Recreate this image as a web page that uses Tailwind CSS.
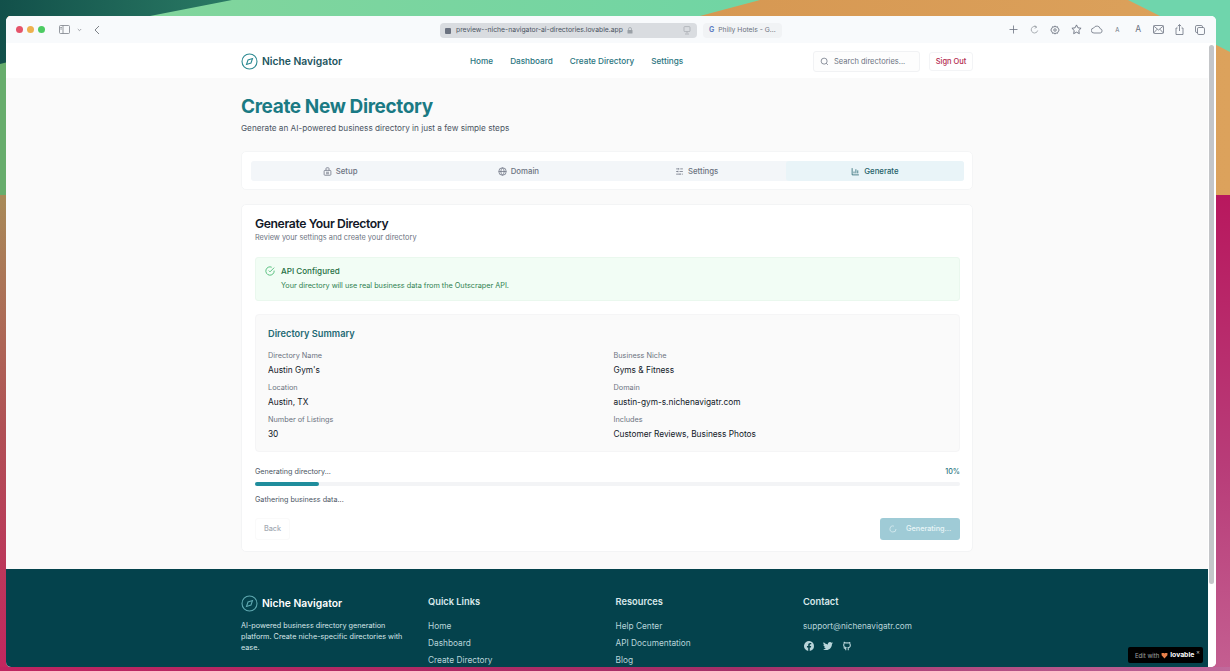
<!DOCTYPE html>
<html lang="en">
<head>
  <meta charset="UTF-8">
  <title>Create New Directory - Niche Navigator</title>
  <script src="https://cdn.jsdelivr.net/npm/@tailwindcss/browser@4"></script>
</head>
<body class="relative w-[1230px] h-[671px] overflow-hidden bg-[#c8487c] font-['Inter',sans-serif]">

  <!-- desktop wallpaper -->
  <svg class="absolute inset-0" width="1230" height="671" viewBox="0 0 1230 671">
    <defs>
      <linearGradient id="topdark" x1="0" x2="1" y1="0" y2="0"><stop offset="0" stop-color="#12504a"/><stop offset="1" stop-color="#2a7a64"/></linearGradient>
      <linearGradient id="band" x1="0" x2="1" y1="0" y2="0"><stop offset="0" stop-color="#86d59a"/><stop offset="1" stop-color="#70d5a4"/></linearGradient>
      <linearGradient id="orange" x1="0" x2="1" y1="0" y2="0"><stop offset="0" stop-color="#cf8a45"/><stop offset="1" stop-color="#dca25c"/></linearGradient>
      <linearGradient id="pink" x1="0" x2="0" y1="0" y2="1"><stop offset="0" stop-color="#b8185e"/><stop offset="0.4" stop-color="#b83c78"/><stop offset="1" stop-color="#cf7fa8"/></linearGradient>
      <linearGradient id="leftside" x1="0" x2="0" y1="0" y2="1"><stop offset="0" stop-color="#a88a58"/><stop offset="0.5" stop-color="#b04f55"/><stop offset="1" stop-color="#c4265f"/></linearGradient>
      <linearGradient id="bottom" x1="0" x2="1" y1="0" y2="0"><stop offset="0" stop-color="#bf2460"/><stop offset="0.6" stop-color="#a42f68"/><stop offset="1" stop-color="#c06a9c"/></linearGradient>
    </defs>
    <rect width="1230" height="671" fill="url(#pink)" x="0" y="195"/>
    <rect y="0" width="1230" height="195" fill="url(#orange)"/>
    <polygon points="1128,0 1230,0 1230,52 1160,16" fill="#6fd5ac"/>
    <polygon points="0,0 760,0 700,16 0,16" fill="url(#band)"/>
    <rect x="0" y="60" width="8" height="135" fill="#67ad6c"/>
    <rect x="0" y="195" width="8" height="476" fill="url(#leftside)"/>
    <polygon points="0,0 232,0 150,16 8,16 8,62 0,64" fill="url(#topdark)"/>
    <rect y="667" width="1230" height="4" fill="url(#bottom)"/>
  </svg>

  <!-- browser window -->
  <div class="absolute left-[6px] top-[16px] w-[1210px] h-[651px] rounded-[5px] overflow-hidden bg-white flex flex-col">

    <!-- safari toolbar -->
    <div class="h-[27px] shrink-0 bg-[#f8fafc] relative flex items-center text-[#6b7280]">
      <div class="flex items-center gap-[4px] ml-[10px]">
        <span class="w-[7px] h-[7px] rounded-full bg-[#e5546a]"></span>
        <span class="w-[7px] h-[7px] rounded-full bg-[#eeb14e]"></span>
        <span class="w-[7px] h-[7px] rounded-full bg-[#4ccb62]"></span>
      </div>
      <svg class="ml-[14px]" width="11" height="9" viewBox="0 0 11 9" fill="none" stroke="#7b8088" stroke-width="0.8"><rect x="0.5" y="0.5" width="10" height="8" rx="1"/><path d="M4 0.5v8M1.3 2.5h1.6M1.3 4h1.6"/></svg>
      <svg class="ml-[7px]" width="5" height="4" viewBox="0 0 5 4" fill="none" stroke="#8a8f96" stroke-width="0.8"><path d="M0.8 1l1.7 1.7L4.2 1"/></svg>
      <svg class="ml-[12px]" width="6" height="10" viewBox="0 0 6 10" fill="none" stroke="#6f747b" stroke-width="0.9"><path d="M5 1L1 5l4 4"/></svg>

      <div class="absolute left-[434px] top-[7px] w-[257px] h-[15px] rounded-[4px] bg-[#d9dce0] flex items-center px-[5px] text-[6.8px] text-[#4b5563] whitespace-nowrap">
        <span class="w-[6px] h-[6px] rounded-[1px] bg-[#6b7280] mr-[5px]"></span>
        <span>preview--niche-navigator-ai-directories.lovable.app</span>
        <svg class="ml-[4px]" width="6" height="7" viewBox="0 0 6 7" fill="#9aa0a6"><rect x="0.5" y="3" width="5" height="3.6" rx="0.6"/><path d="M1.5 3V2a1.5 1.5 0 013 0v1" fill="none" stroke="#9aa0a6" stroke-width="0.7"/></svg>
        <svg class="ml-auto mr-[1px]" width="8" height="9" viewBox="0 0 8 9" fill="none" stroke="#a3a8ae" stroke-width="0.7"><rect x="1" y="0.6" width="6" height="5" rx="0.8"/><path d="M4 5.6v1.6M2 8h4"/></svg>
      </div>
      <div class="absolute left-[697px] top-[7px] w-[79px] h-[15px] rounded-[4px] bg-[#f1f3f5] flex items-center pl-[6px] text-[6.8px] text-[#6b7280] whitespace-nowrap">
        <span class="text-[7px] font-bold text-[#5f7fc4] mr-[4px]">G</span>
        <span>Philly Hotels - G...</span>
      </div>

      <div class="absolute right-[5.5px] top-0 h-full grid grid-cols-[repeat(10,20.7px)] items-center justify-items-center">
        <svg width="9" height="9" viewBox="0 0 9 9" fill="none" stroke="#6b7280" stroke-width="0.8"><path d="M4.5 0.5v8M0.5 4.5h8"/></svg>
        <svg width="9" height="9" viewBox="0 0 9 9" fill="none" stroke="#8a8f96" stroke-width="0.7"><path d="M6.8 2.3A3.3 3.3 0 104.5 8a3.3 3.3 0 003.2-2.5M4.6 0.5l2 1.6-1.9 1.2"/></svg>
        <svg width="10" height="10" viewBox="0 0 24 24" fill="none" stroke="#6b7280" stroke-width="2"><circle cx="12" cy="12" r="3"/><path d="M12 2l2 3 4-1 1 4 3 2-2 2 2 2-3 2-1 4-4-1-2 3-2-3-4 1-1-4-3-2 2-2-2-2 3-2 1-4 4 1z"/></svg>
        <svg width="11" height="11" viewBox="0 0 24 24" fill="none" stroke="#6b7280" stroke-width="2"><path d="M12 2l3.1 6.3 6.9 1-5 4.9 1.2 6.9-6.2-3.3-6.2 3.3L7 14.2l-5-4.9 6.9-1z"/></svg>
        <svg width="12" height="9" viewBox="0 0 24 16" fill="none" stroke="#6b7280" stroke-width="1.6"><path d="M6 15a5 5 0 01-.6-10A7 7 0 0118.5 6.5 4.3 4.3 0 0118.5 15z"/></svg>
        <span class="text-[6px] text-[#6b7280]">A</span>
        <span class="text-[8.5px] text-[#6b7280]">A</span>
        <svg width="11" height="9" viewBox="0 0 11 9" fill="none" stroke="#6b7280" stroke-width="0.8"><rect x="0.5" y="0.5" width="10" height="8" rx="1"/><path d="M0.7 1l4.8 4 4.8-4M0.7 8l3.4-3.8M10.3 8L6.9 4.2"/></svg>
        <svg width="9" height="11" viewBox="0 0 9 11" fill="none" stroke="#6b7280" stroke-width="0.8"><path d="M2.5 4H1v6.5h7V4H6.5M4.5 7V0.7M2.8 2.2L4.5 0.6l1.7 1.6"/></svg>
        <svg width="10" height="10" viewBox="0 0 10 10" fill="none" stroke="#6b7280" stroke-width="0.8"><rect x="2.5" y="2.5" width="7" height="7" rx="1.3"/><path d="M2.5 7.5H1.8A1.3 1.3 0 01.5 6.2V1.8A1.3 1.3 0 011.8.5h4.4a1.3 1.3 0 011.3 1.3v.7"/></svg>
      </div>
    </div>

    <div class="flex-1 flex min-h-0">
      <div class="flex-1 flex flex-col min-w-0">

        <!-- site header -->
        <header class="h-[35px] shrink-0 bg-white pl-[235px] pt-[2px] flex items-center relative">
          <svg width="17" height="17" viewBox="0 0 17 17" fill="none" stroke="#2d8a92" stroke-width="1.1"><circle cx="8.5" cy="8.5" r="7.5"/><path d="M11.5 5.5L10 10l-4.500 1.500L7 7z"/></svg>
          <span class="ml-[4px] mt-[1px] text-[10.3px] font-semibold text-[#215560]">Niche Navigator</span>
          <nav class="absolute left-[464px] flex gap-[17px] text-[8.2px] font-medium text-[#2a7580]">
            <a>Home</a><a>Dashboard</a><a>Create Directory</a><a>Settings</a>
          </nav>
          <div class="absolute left-[807px] w-[107px] h-[21px] rounded-[3px] border border-[#f1f2f4] bg-[#fdfdfd] flex items-center pl-[6px] text-[7.5px] text-[#6b7280]">
            <svg width="9" height="9" viewBox="0 0 24 24" fill="none" stroke="#6b7280" stroke-width="2"><circle cx="11" cy="11" r="8"/><path d="M21 21l-4.300-4.300"/></svg>
            <span class="ml-[5px]">Search directories...</span>
          </div>
          <button class="absolute left-[923px] w-[44px] h-[19px] rounded-[3px] border border-[#f3f4f6] text-[7.5px] font-medium text-[#b3294e]">Sign Out</button>
        </header>

        <main class="h-[491px] shrink-0 bg-[#fafafa] pl-[235px] pr-[235px] pt-[18px]">
          <h1 class="text-[19px] leading-[22px] font-bold tracking-[-0.37px] text-[#1a7a84]">Create New Directory</h1>
          <p class="mt-[4px] text-[8.2px] leading-[12px] text-[#4b5563]">Generate an AI-powered business directory in just a few simple steps</p>

          <!-- steps -->
          <div class="mt-[17px] h-[39px] rounded-[5px] border border-[#f4f5f6] bg-white pl-[9px] pr-[8px] py-[9px]">
            <div class="grid grid-cols-4 h-[20px] rounded-[3px] bg-[#f3f6f9] text-[7.8px] font-medium text-[#6b7280]">
              <div class="flex items-center justify-center gap-[4px] pt-[1px]">
                <svg width="9" height="9" viewBox="0 0 24 24" fill="none" stroke="#6b7280" stroke-width="2"><rect x="3" y="9" width="18" height="13" rx="2"/><path d="M8 9V4a2 2 0 012-2h4a2 2 0 012 2v5M8 14h8M8 18h8"/></svg>Setup</div>
              <div class="flex items-center justify-center gap-[4px] pt-[1px]">
                <svg width="9" height="9" viewBox="0 0 24 24" fill="none" stroke="#6b7280" stroke-width="2"><circle cx="12" cy="12" r="10"/><path d="M2 12h20M12 2a15 15 0 010 20M12 2a15 15 0 000 20"/></svg>Domain</div>
              <div class="flex items-center justify-center gap-[4px] pt-[1px]">
                <svg width="9" height="9" viewBox="0 0 24 24" fill="none" stroke="#6b7280" stroke-width="2"><path d="M10 5H3M21 5h-7M10 3v4M21 12h-9M8 12H3M8 10v4M14 19H3M21 19h-3M14 17v4"/></svg>Settings</div>
              <div class="flex items-center justify-center gap-[4px] pt-[1px] rounded-[3px] bg-[#e9f4f8] text-[#1f5f69]">
                <svg width="9" height="9" viewBox="0 0 24 24" fill="none" stroke="#1f5f69" stroke-width="2"><path d="M3 3v18h18M8 17v-5M13 17V6M18 17v-8"/></svg>Generate</div>
            </div>
          </div>

          <!-- generate card -->
          <section class="mt-[14px] h-[348px] rounded-[5px] border border-[#f3f4f5] bg-white pl-[13px] pr-[12px] pt-[11px]">
            <h2 class="text-[12.2px] leading-[16px] font-semibold tracking-[-0.39px] text-[#111827]">Generate Your Directory</h2>
            <p class="mt-[1px] text-[7.35px] leading-[10px] text-[#6b7280]">Review your settings and create your directory</p>

            <div class="mt-[14px] h-[44px] rounded-[3px] border border-[#eaf8ee] bg-[#f2fdf5] flex pl-[9px] pt-[8px]">
              <svg width="10" height="10" viewBox="0 0 24 24" fill="none" stroke="#3fb56b" stroke-width="2"><path d="M22 11.1V12a10 10 0 11-5.900-9.100"/><path d="M22 4L12 14l-3-3"/></svg>
              <div class="ml-[6px]">
                <div class="text-[8.1px] leading-[11px] font-medium text-[#1e6f43]">API Configured</div>
                <div class="mt-[4px] text-[7.28px] leading-[10px] text-[#2f8150]">Your directory will use real business data from the Outscraper API.</div>
              </div>
            </div>

            <!-- summary -->
            <div class="mt-[13px] h-[138px] rounded-[4px] border border-[#f5f5f6] bg-[#fafafa] px-[12px] pt-[12px]">
              <h3 class="text-[9.25px] leading-[13px] font-semibold text-[#1f6a74]">Directory Summary</h3>
              <div class="mt-[11px] grid grid-cols-2 gap-y-[7px]">
                <div><div class="text-[7.3px] leading-[10px] text-[#6b7280]">Directory Name</div><div class="mt-[3px] text-[8.3px] leading-[12px] text-[#111827]">Austin Gym's</div></div>
                <div class="pl-[6px]"><div class="text-[7.3px] leading-[10px] text-[#6b7280]">Business Niche</div><div class="mt-[3px] text-[8.3px] leading-[12px] text-[#111827]">Gyms &amp; Fitness</div></div>
                <div><div class="text-[7.3px] leading-[10px] text-[#6b7280]">Location</div><div class="mt-[3px] text-[8.3px] leading-[12px] text-[#111827]">Austin, TX</div></div>
                <div class="pl-[6px]"><div class="text-[7.3px] leading-[10px] text-[#6b7280]">Domain</div><div class="mt-[3px] text-[8.3px] leading-[12px] text-[#111827]">austin-gym-s.nichenavigatr.com</div></div>
                <div><div class="text-[7.3px] leading-[10px] text-[#6b7280]">Number of Listings</div><div class="mt-[3px] text-[8.3px] leading-[12px] text-[#111827]">30</div></div>
                <div class="pl-[6px]"><div class="text-[7.3px] leading-[10px] text-[#6b7280]">Includes</div><div class="mt-[3px] text-[8.3px] leading-[12px] text-[#111827]">Customer Reviews, Business Photos</div></div>
              </div>
            </div>

            <!-- progress -->
            <div class="mt-[15px] flex justify-between text-[7.2px] leading-[10px] text-[#4b5563]">
              <span>Generating directory...</span><span class="font-medium text-[#2a7580]">10%</span>
            </div>
            <div class="mt-[5px] h-[4px] rounded-full bg-[#f3f4f6]">
              <div class="h-full rounded-full bg-[#1f8d9c]" style="width: 9.1%"></div>
            </div>
            <p class="mt-[9px] text-[7.2px] leading-[10px] text-[#4b5563]">Gathering business data...</p>

            <div class="mt-[13px] flex items-center justify-between">
              <button class="w-[35px] h-[22px] rounded-[3px] border border-[#fafafa] text-[7.3px] font-medium text-[#a3a9b2]">Back</button>
              <button class="w-[80px] h-[22px] rounded-[3px] bg-[#9fcbd6] flex items-center pl-[9px] text-[7.3px] font-medium text-[#e8f5f7]">
                <svg width="8" height="8" viewBox="0 0 24 24" fill="none" stroke="#e8f5f7" stroke-width="2"><path d="M21 12a9 9 0 11-6.200-8.560"/></svg>
                <span class="ml-[9px]">Generating...</span>
              </button>
            </div>
          </section>
        </main>

        <!-- footer -->
        <footer class="flex-1 bg-[#04424c] pl-[235px] pt-[25px] grid grid-cols-[187px_187.5px_187.5px_187px] overflow-hidden text-[#b9d5da]">
          <div>
            <div class="flex items-center mt-[1px]">
              <svg width="17" height="17" viewBox="0 0 17 17" fill="none" stroke="#5ea8b0" stroke-width="1.1"><circle cx="8.5" cy="8.5" r="7.5"/><path d="M11.5 5.5L10 10l-4.500 1.500L7 7z"/></svg>
              <span class="ml-[4px] mt-[1px] text-[10.3px] font-semibold text-white">Niche Navigator</span>
            </div>
            <p class="mt-[8px] w-[170px] text-[7.25px] leading-[11px] text-[#d5e5e8]">AI-powered business directory generation platform. Create niche-specific directories with ease.</p>
          </div>
          <div>
            <h4 class="text-[9.3px] leading-[16px] font-semibold text-[#d8e8ea]">Quick Links</h4>
            <ul class="mt-[11px] space-y-[6px] text-[8.3px] leading-[11px]"><li>Home</li><li>Dashboard</li><li>Create Directory</li></ul>
          </div>
          <div>
            <h4 class="text-[9.3px] leading-[16px] font-semibold text-[#d8e8ea]">Resources</h4>
            <ul class="mt-[11px] space-y-[6px] text-[8.3px] leading-[11px]"><li>Help Center</li><li>API Documentation</li><li>Blog</li></ul>
          </div>
          <div>
            <h4 class="text-[9.3px] leading-[16px] font-semibold text-[#d8e8ea]">Contact</h4>
            <p class="mt-[11px] text-[8.2px] leading-[11px]">support@nichenavigatr.com</p>
            <div class="mt-[9px] ml-[1px] flex gap-[9px]">
              <svg width="10" height="10" viewBox="0 0 24 24" fill="#b9d5da"><path d="M24 12a12 12 0 10-13.9 11.9v-8.4H7.1V12h3V9.4c0-3 1.8-4.700 4.500-4.700 1.300 0 2.700.2 2.700.2v3h-1.500c-1.500 0-2 .9-2 1.900V12h3.400l-.5 3.500h-2.900v8.400A12 12 0 0024 12z"/></svg>
              <svg width="10" height="10" viewBox="0 0 24 24" fill="#b9d5da"><path d="M24 4.6c-.9.4-1.8.7-2.800.8 1-.6 1.800-1.600 2.200-2.700-1 .6-2 1-3.100 1.200A4.900 4.900 0 0011.900 8.400 14 14 0 011.700 3.200a4.900 4.900 0 001.500 6.600c-.8 0-1.600-.2-2.200-.6 0 2.400 1.700 4.400 3.900 4.900-.7.200-1.500.2-2.200.1.600 2 2.400 3.400 4.600 3.400A9.900 9.900 0 010 19.600 14 14 0 007.500 21.800c9.100 0 14.300-7.700 14-14.600 1-.7 1.800-1.600 2.500-2.600z"/></svg>
              <svg width="10" height="10" viewBox="0 0 24 24" fill="none" stroke="#b9d5da" stroke-width="2.5"><path d="M9 22v-4c-3.500.7-4.500-1-5-2.500M15 22v-3.500c0-1 .1-1.500-.5-2.500 2.800-.3 5.500-1.400 5.500-6a4.600 4.600 0 00-1.300-3.200 4.200 4.200 0 00-.1-3.200s-1.100-.3-3.500 1.300a12 12 0 00-6.200 0C6.500 2.800 5.400 3.100 5.400 3.100a4.200 4.200 0 00-.1 3.200A4.600 4.600 0 004 9.500c0 4.600 2.700 5.700 5.500 6-.6.600-.6 1.200-.5 2"/></svg>
            </div>
          </div>
        </footer>
      </div>

      <!-- page scrollbar -->
      <div class="w-[8px] shrink-0 bg-white relative">
        <div class="absolute left-[1px] top-[2px] w-[5px] h-[539px] rounded-full bg-[#c4c6c9]"></div>
      </div>
    </div>
  </div>

  <!-- lovable badge -->
  <div class="absolute left-[1128px] top-[647px] w-[75px] h-[16px] rounded-[2px] bg-black flex items-center pl-[7px] text-[6px] text-[#a3a3a3] whitespace-nowrap">
    <span>Edit with</span>
    <svg class="ml-[2px]" width="7" height="7" viewBox="0 0 24 24" fill="#e8804a"><path d="M12 22L2 11V3h8l2 2 2-2h8v8z"/></svg>
    <span class="ml-[2px] text-[6.8px] font-bold text-white">lovable</span>
    <span class="absolute right-[3px] top-0 text-[6px] text-[#cccccc]">×</span>
  </div>
</body>
</html>
